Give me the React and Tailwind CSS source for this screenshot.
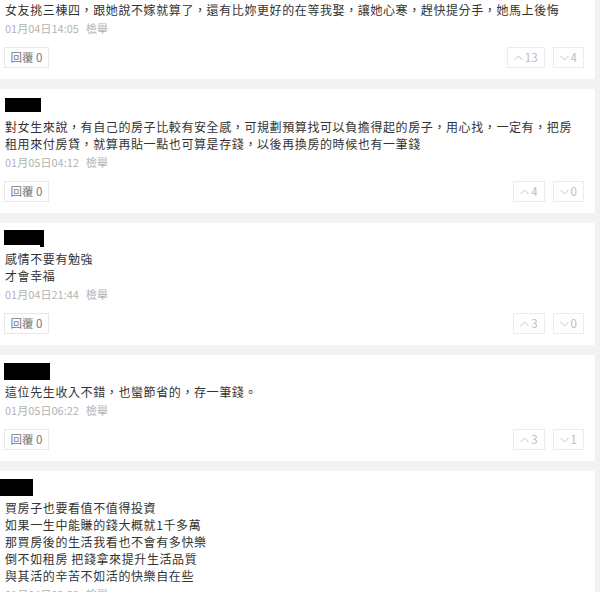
import React from 'react';

const comments = [
  {
    id: 1,
    name: null,
    lines: ['女友挑三棟四，跟她說不嫁就算了，還有比妳更好的在等我娶，讓她心寒，趕快提分手，她馬上後悔'],
    date: '01月04日14:05',
    up: 13,
    down: 4,
  },
  {
    id: 2,
    name: 'ml-[5px] mt-[1px] w-[36px] h-[14px]',
    lines: [
      '對女生來說，有自己的房子比較有安全感，可規劃預算找可以負擔得起的房子，用心找，一定有，把房',
      '租用來付房貸，就算再貼一點也可算是存錢，以後再換房的時候也有一筆錢',
    ],
    date: '01月05日04:12',
    up: 4,
    down: 0,
  },
  {
    id: 3,
    name: 'ml-[4px] -mt-[1px] w-[40px] h-[15px]',
    tail: true,
    lines: ['感情不要有勉強', '才會幸福'],
    date: '01月04日21:44',
    up: 3,
    down: 0,
  },
  {
    id: 4,
    name: 'ml-[4px] w-[46px] h-[17px]',
    lines: ['這位先生收入不錯，也蠻節省的，存一筆錢。'],
    date: '01月05日06:22',
    up: 3,
    down: 1,
  },
  {
    id: 5,
    name: 'ml-0 w-[33px] h-[17px]',
    lines: [
      '買房子也要看值不值得投資',
      '如果一生中能賺的錢大概就1千多萬',
      '那買房後的生活我看也不會有多快樂',
      '倒不如租房 把錢拿來提升生活品質',
      '與其活的辛苦不如活的快樂自在些',
    ],
    date: '01月04日22:59',
    up: 2,
    down: 0,
  },
];

function Chevron({ dir }) {
  return (
    <svg width="9" height="6" viewBox="0 0 9 6" className="mr-[2px]">
      {dir === 'up' ? (
        <polyline points="0.5,5 4.5,1 8.5,5" fill="none" stroke="#c4c4c4" strokeWidth="1" />
      ) : (
        <polyline points="0.5,1 4.5,5 8.5,1" fill="none" stroke="#c4c4c4" strokeWidth="1" />
      )}
    </svg>
  );
}

function Comment({ c }) {
  return (
    <div className="bg-white w-[595px] pt-[8px] pb-[11px] pr-[11px]">
      {/* redacted name */}
      <div className="h-[17px]">
        {c.name && (
          <div className={`relative bg-black ${c.name}`}>
            {c.tail && <div className="absolute right-0 -bottom-[2px] w-[4px] h-[2px] bg-black" />}
          </div>
        )}
      </div>
      <div className="mt-[3px] pl-[5px] text-[12px] leading-[17px] tracking-[0.6px] text-[#333]">
        {c.lines.map((l, i) => (
          <div key={i} className="whitespace-nowrap">{l}</div>
        ))}
      </div>
      <div className="mt-[2px] pl-[5px] h-[17px] flex items-center gap-[7px] text-[11px] text-[#b3b3b3]">
        <span>{c.date}</span>
        <span>檢舉</span>
      </div>
      <div className="mt-[10px] pl-[4px] flex items-center h-[21px]">
        <button className="h-[21px] w-[45px] border border-[#e8e8e8] bg-white text-[11.5px] text-[#777] flex items-center justify-center">
          回覆 0
        </button>
        <div className="ml-auto flex gap-[8px]">
          <button className="h-[21px] px-[6px] min-w-[30px] border border-[#ececec] bg-white text-[11.5px] text-[#bbb] flex items-center justify-center">
            <Chevron dir="up" />
            {c.up}
          </button>
          <button className="h-[21px] px-[6px] min-w-[30px] border border-[#ececec] bg-white text-[11.5px] text-[#bbb] flex items-center justify-center">
            <Chevron dir="down" />
            {c.down}
          </button>
        </div>
      </div>
    </div>
  );
}

export default function App() {
  return (
    <div
      className="w-[600px] h-[592px] overflow-hidden bg-[#f2f2f2]"
      style={{ fontFamily: '"Noto Sans CJK TC", "Noto Sans", sans-serif' }}
    >
      <div className="-mt-[27px] flex flex-col gap-[10px]">
        {comments.map((c) => (
          <Comment key={c.id} c={c} />
        ))}
      </div>
    </div>
  );
}
